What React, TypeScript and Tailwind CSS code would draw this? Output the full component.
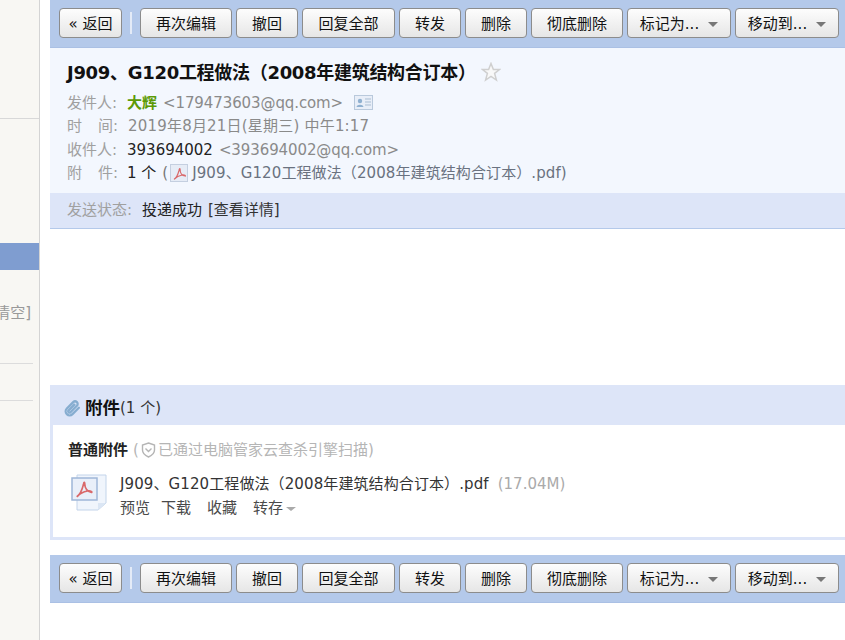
const font = { fontFamily: '"DejaVu Sans", "Noto Sans CJK SC", sans-serif' }

const BASE_NAME = "J909、G120工程做法\uFF082008年建筑结构合订本\uFF09"

const Btn = ({ w, label, arrow }: { w: string; label: string; arrow?: boolean }) => (
  <div className={`${w} h-[30px] shrink-0 flex items-center justify-center gap-[9px] pt-[2px] rounded-[4px] border border-[#8c8c8c] bg-gradient-to-b from-[#fdfdfd] to-[#e6e6e6] text-[15px] text-[#111]`}>
    <span className="whitespace-nowrap">{label}</span>
    {arrow && <span className="w-0 h-0 border-x-[5px] border-x-transparent border-t-[5px] border-t-[#777]" />}
  </div>
)

const Toolbar = () => (
  <div className="h-[48px] shrink-0 bg-[#b4c9ea] border-b border-[#aac0e4] flex items-start pt-[8px] pl-[9px]">
    <Btn w="w-[63px]" label="« 返回" />
    <div className="w-[2px] h-[22px] bg-[#e4ebf7] mt-[4px] ml-[8px] mr-[8px]" />
    <div className="flex gap-[4px]">
      <Btn w="w-[92px]" label="再次编辑" />
      <Btn w="w-[62px]" label="撤回" />
      <Btn w="w-[93px]" label="回复全部" />
      <Btn w="w-[62px]" label="转发" />
      <Btn w="w-[62px]" label="删除" />
      <Btn w="w-[92px]" label="彻底删除" />
      <Btn w="w-[104px]" label="标记为..." arrow />
      <Btn w="w-[104px]" label="移动到..." arrow />
    </div>
  </div>
)

const PdfGlyph = ({ size }: { size: number }) => (
  <svg width={size} height={size} viewBox="0 0 18 18" fill="none" stroke="#d9686a" strokeWidth="1.500">
    <path d="M2.500 16c2.500-1.500 4.500-5 6-11 .3-2.500 1.200-2.500 1.200-.5 0 3.500 2.300 7 6 7.500 1.200 0-.5-1.800-3.500-1.200-3.500.6-7 2.300-9.700 5.200z" />
  </svg>
)

const Row = ({ label, children }: { label: React.ReactNode; children: React.ReactNode }) => (
  <div className="h-[23.500px] flex items-center text-[15px] whitespace-nowrap">
    <span className="w-[60px] shrink-0 text-[#a0a0a0]">{label}</span>
    {children}
  </div>
)

const SpacedLabel = ({ a, b }: { a: string; b: string }) => (
  <span className="w-[53px] flex">
    <span>{a}</span>
    <span className="ml-[16px]">{b}</span>
    <span>:</span>
  </span>
)

export default function App() {
  return (
    <div style={font} className="w-[845px] h-[640px] overflow-hidden flex bg-white">
      <aside className="w-[40px] shrink-0 h-full bg-[#f8f7f3] border-r border-[#d4d4d4] flex flex-col">
        <div className="h-[119px] border-b border-[#d8d8d8]" />
        <div className="h-[124px]" />
        <div className="h-[27px] bg-[#7f9dd0]" />
        <div className="h-[93px] flex items-center justify-end pr-[8px] text-[15px] text-[#999] overflow-hidden whitespace-nowrap pb-[7px]">清空]</div>
        <div className="h-[38px] w-[33px] border-y border-[#dcdcdc]" />
      </aside>

      <div className="w-[10px] shrink-0" />

      <main className="flex-1 min-w-0 flex flex-col">
        <Toolbar />

        <section className="h-[145px] bg-[#f3f7fe] pl-[17px] pt-[9px]">
          <div className="flex items-center h-[30px] mb-[4px]">
            <span className="text-[18px] tracking-[-0.3px] font-bold text-[#111] whitespace-nowrap">{BASE_NAME}</span>
            <svg width="20" height="20" viewBox="0 0 20 20" className="ml-[5px]" fill="#f8f8f8" stroke="#cfcfcf" strokeWidth="1.500">
              <path d="M10 1.500l2.400 6h6.100l-4.900 3.900 1.800 6.600-5.400-3.700-5.400 3.700 1.800-6.600-4.900-3.900h6.100z" />
            </svg>
          </div>
          <Row label="发件人:">
            <span className="font-bold text-[#5c9a05] text-[15px]">大辉</span>
            <span className="ml-[6px] text-[#8a8a8a] tracking-[-0.1px]">&lt;179473603@qq.com&gt;</span>
            <svg width="19" height="15" viewBox="0 0 19 15" className="ml-[11px]">
              <rect x="0.500" y="0.500" width="18" height="14" fill="#e8eef8" stroke="#b9c9dc" />
              <circle cx="6" cy="6" r="2.200" fill="#8fb0d0" />
              <path d="M2.500 12c.5-3 6.500-3 7 0z" fill="#8fb0d0" />
              <path d="M11 4h6M11 7h6M11 10h6" stroke="#a9bdd2" />
            </svg>
          </Row>
          <Row label={<SpacedLabel a="时" b="间" />}>
            <span className="ml-[1px] text-[#8a8a8a] tracking-[0.2px]">2019年8月21日(星期三) 中午1:17</span>
          </Row>
          <Row label="收件人:">
            <span className="text-[#222]">393694002</span>
            <span className="ml-[6px] text-[#8a8a8a] tracking-[-0.1px]">&lt;393694002@qq.com&gt;</span>
          </Row>
          <Row label={<SpacedLabel a="附" b="件" />}>
            <span className="text-[#222]">1 个</span>
            <span className="ml-[6px] text-[#777]">(</span>
            <span className="w-[18px] h-[18px] mx-[2px] bg-[#e6ecf6] border border-[#c4cfe0] flex items-center justify-center">
              <PdfGlyph size={15} />
            </span>
            <span className="ml-[2px] text-[#6a7280] tracking-[0.1px]">{BASE_NAME}.pdf)</span>
          </Row>
        </section>

        <div className="h-[36px] bg-[#dde5f8] border-b border-[#b4c9ea] pl-[17px] flex items-center text-[15px]">
          <span className="w-[75px] text-[#a0a0a0]">发送状态:</span>
          <span className="text-[#222] whitespace-nowrap">投递成功</span>
          <span className="ml-[6px] text-[#333] whitespace-nowrap">[查看详情]</span>
        </div>

        <div className="h-[156px]" />

        <section className="h-[155px] bg-[#dde5f8] pl-[3px] pb-[3px] flex flex-col">
          <div className="h-[40px] shrink-0 flex items-center pl-[11px] pt-[6px]">
            <svg width="17" height="17" viewBox="0 0 24 24" fill="none" stroke="#86add0" strokeWidth="3.200" strokeLinecap="round">
              <path d="M21 11l-9 9a5.500 5.500 0 0 1-8-8l9-9a3.600 3.600 0 0 1 5.200 5.200l-9 9a1.800 1.800 0 0 1-2.600-2.600l8-8" />
            </svg>
            <span className="ml-[4px] text-[17.500px] font-bold text-[#111]">附件</span>
            <span className="text-[15px] text-[#333] whitespace-nowrap">(1 个)</span>
          </div>
          <div className="flex-1 bg-white pl-[15px] pt-[16px]">
            <div className="flex items-center text-[15px] whitespace-nowrap h-[18px]">
              <span className="font-bold text-[#222]">普通附件</span>
              <span className="ml-[5px] text-[#b5b5b5]">(</span>
              <svg width="15" height="16" viewBox="0 0 15 16" className="mx-[2px]" fill="none" stroke="#b5b5b5" strokeWidth="1.400">
                <path d="M7.500 1l6 2v5c0 3.500-3 5.700-6 7-3-1.300-6-3.500-6-7V3z" />
                <path d="M4.500 6.500l3 3 3-3" />
              </svg>
              <span className="text-[#b5b5b5]">已通过电脑管家云查杀引擎扫描)</span>
            </div>
            <div className="flex mt-[13px]">
              <svg width="38" height="40" viewBox="0 0 38 40" className="shrink-0 ml-[3px] mt-[1px]">
                <path d="M6 2h29v28l-8 7H6z" fill="#f0f5fc" stroke="#c3d4ea" />
                <path d="M27 37v-7h8z" fill="#dbe6f4" />
                <rect x="1" y="5" width="25" height="22" fill="#e9eff9" stroke="#9fb7d8" strokeWidth="1.500" />
                <g transform="translate(3 6)">
                  <PdfGlyph size={20} />
                </g>
              </svg>
              <div className="ml-[11px]">
                <div className="h-[24px] flex items-center text-[15px] whitespace-nowrap">
                  <span className="text-[#333] tracking-[0.1px]">{BASE_NAME}.pdf</span>
                  <span className="ml-[9px] text-[#aaa]">(17.04M)</span>
                </div>
                <div className="h-[24px] flex items-center text-[15px] text-[#4a4a4a]">
                  <span>预览</span>
                  <span className="ml-[11px]">下载</span>
                  <span className="ml-[16px]">收藏</span>
                  <span className="ml-[16px]">转存</span>
                  <span className="ml-[3px] mt-[1px] w-0 h-0 border-x-[5px] border-x-transparent border-t-[4px] border-t-[#aaa]" />
                </div>
              </div>
            </div>
          </div>
        </section>

        <div className="h-[15px]" />
        <Toolbar />
      </main>
    </div>
  )
}
